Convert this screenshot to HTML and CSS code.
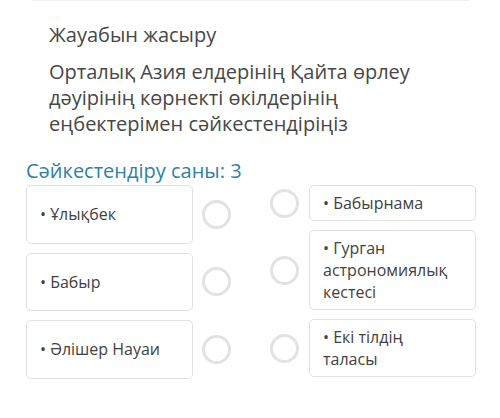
FILE: index.html
```html
<!DOCTYPE html>
<html lang="kk">
<head>
<meta charset="utf-8">
<link rel="stylesheet" href="styles.css">
</head>
<body>
<div class="page">
  <div class="topline"></div>
  <div class="head">
    <div class="hide">Жауабын жасыру</div>
    <div class="question">Орталық Азия елдерінің Қайта өрлеу дәуірінің көрнекті өкілдерінің еңбектерімен сәйкестендіріңіз</div>
  </div>
  <div class="count">Сәйкестендіру саны: 3</div>
  <div class="match">
    <div class="col left">
      <div class="item"><div class="card fixed">• Ұлықбек</div><span class="dot"></span></div>
      <div class="item"><div class="card fixed">• Бабыр</div><span class="dot"></span></div>
      <div class="item"><div class="card fixed">• Әлішер Науаи</div><span class="dot"></span></div>
    </div>
    <div class="col right">
      <div class="item"><span class="dot"></span><div class="card">• Бабырнама</div></div>
      <div class="item"><span class="dot"></span><div class="card">• Гурган астрономиялық кестесі</div></div>
      <div class="item"><span class="dot"></span><div class="card">• Екі тілдің таласы</div></div>
    </div>
  </div>
</div>
</body>
</html>
```

FILE: styles.css
```css
* { box-sizing: border-box; }
html, body { margin: 0; padding: 0; background: #fff; }
body {
  font-family: "Open Sans", "Noto Sans", sans-serif;
  color: #454545;
  width: 500px;
  height: 418px;
  overflow: hidden;
}
.page { position: relative; }
.topline {
  height: 1px;
  margin: 0 30px 0 32px;
  background: #efefef;
}
.head {
  padding: 21px 0 0 49px;
}
.hide {
  font-size: 20px;
  line-height: 26px;
  color: #474747;
}
.question {
  margin-top: 11px;
  font-size: 20px;
  line-height: 26px;
  color: #474747;
  width: 380px;
}
.count {
  margin: 21px 0 0 26px;
  font-size: 20px;
  line-height: 26px;
  color: #2f7fa6;
}
.match {
  display: flex;
  margin: 1px 0 0 26px;
  gap: 39px;
}
.col {
  display: flex;
  flex-direction: column;
  gap: 9px;
}
.item {
  display: flex;
  align-items: center;
}
.left .item { gap: 9px; }
.right .item { gap: 10px; }
.card {
  width: 167px;
  border: 1px solid #e2e2e2;
  border-radius: 5px;
  font-size: 16px;
  line-height: 22px;
  padding: 6px 12px 6px 13px;
  color: #424242;
  background: #fff;
  box-shadow: 0 0 1px rgba(0,0,0,0.04);
}
.card.fixed {
  height: 58.5px;
  display: flex;
  align-items: center;
}
.right .card { padding-right: 20px; }
.dot {
  flex: none;
  width: 29px;
  height: 29px;
  border-radius: 50%;
  border: 3px solid #e2e2e2;
}
```
